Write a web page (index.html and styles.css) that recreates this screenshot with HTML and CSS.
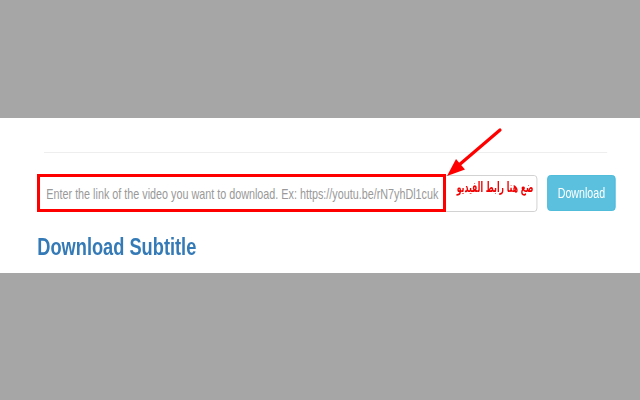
FILE: index.html
```html
<!DOCTYPE html>
<html lang="en">
<head>
    <meta charset="UTF-8">
    <meta name="viewport" content="width=device-width, initial-scale=1.0">
    <title>Download Subtitle</title>
    <link rel="stylesheet" href="styles.css">
</head>
<body>

    <div class="band">
        <!-- the page itself, squeezed sideways like the shot -->
        <div class="page">
            <hr class="rule">
            <form class="grab">
                <input type="text" class="link" name="link" placeholder="Enter the link of the video you want to download. Ex: https://youtu.be/rN7yhDl1cuk">
                <button type="button" class="go">Download</button>
            </form>
            <h2 class="title">Download Subtitle</h2>
        </div>

        <!-- annotations drawn over the page -->
        <div class="mark"></div>
        <span class="hint" dir="rtl" lang="ar">ضع هنا رابط الفيديو</span>
        <svg class="arrow" width="70" height="60" viewBox="0 0 70 60">
            <line x1="60" y1="6" x2="19" y2="41" stroke="#ff0000" stroke-width="3.2" stroke-linecap="round"/>
            <polygon points="7,52 16,35 25,45.5" fill="#ff0000"/>
        </svg>
    </div>

</body>
</html>
```

FILE: styles.css
```css
body{
    margin: 0;
    background-color: #a6a6a6;
    font-family: "Liberation Sans", Arial, sans-serif;
}
.band{
    position: relative;
    margin-top: 118px;
    height: 155px;
    background-color: #fff;
    overflow: hidden;
}
.page{
    width: 842px;
    box-sizing: border-box;
    padding: 34px 0 0 50px;
    transform: scaleX(0.76);
    transform-origin: 0 0;
}
.rule{
    margin: 0 0 22px 8px;
    width: 741px;
    height: 0;
    border: 0;
    border-top: 1px solid #eee;
}
.grab{
    display: flex;
    gap: 13px;
    margin: 0;
}
.link{
    width: 657px;
    height: 37px;
    box-sizing: border-box;
    border: 1px solid #ccc;
    border-radius: 4px;
    padding: 0 10px;
    font-family: "Liberation Sans", Arial, sans-serif;
    font-size: 14.2px;
    color: #555;
}
.link::placeholder{
    color: #999;
}
.go{
    width: 90px;
    height: 36px;
    background-color: #5bc0de;
    border: 1px solid #46b8da;
    border-radius: 4px;
    color: #fff;
    font-family: "Liberation Sans", Arial, sans-serif;
    font-size: 14px;
    padding: 0;
}
.title{
    margin: 22px 0 0 -1px;
    color: #337ab7;
    font-size: 24px;
    font-weight: bold;
    line-height: 26px;
}
.mark{
    position: absolute;
    left: 37px;
    top: 56px;
    width: 409px;
    height: 38px;
    box-sizing: border-box;
    border: 3px solid #ff0000;
}
.hint{
    position: absolute;
    right: 107px;
    top: 61px;
    font-family: "DejaVu Sans", sans-serif;
    font-size: 14px;
    font-weight: bold;
    color: #f00000;
    white-space: nowrap;
    transform: scaleX(0.55);
    transform-origin: right center;
}
.arrow{
    position: absolute;
    left: 440px;
    top: 6px;
}
```
